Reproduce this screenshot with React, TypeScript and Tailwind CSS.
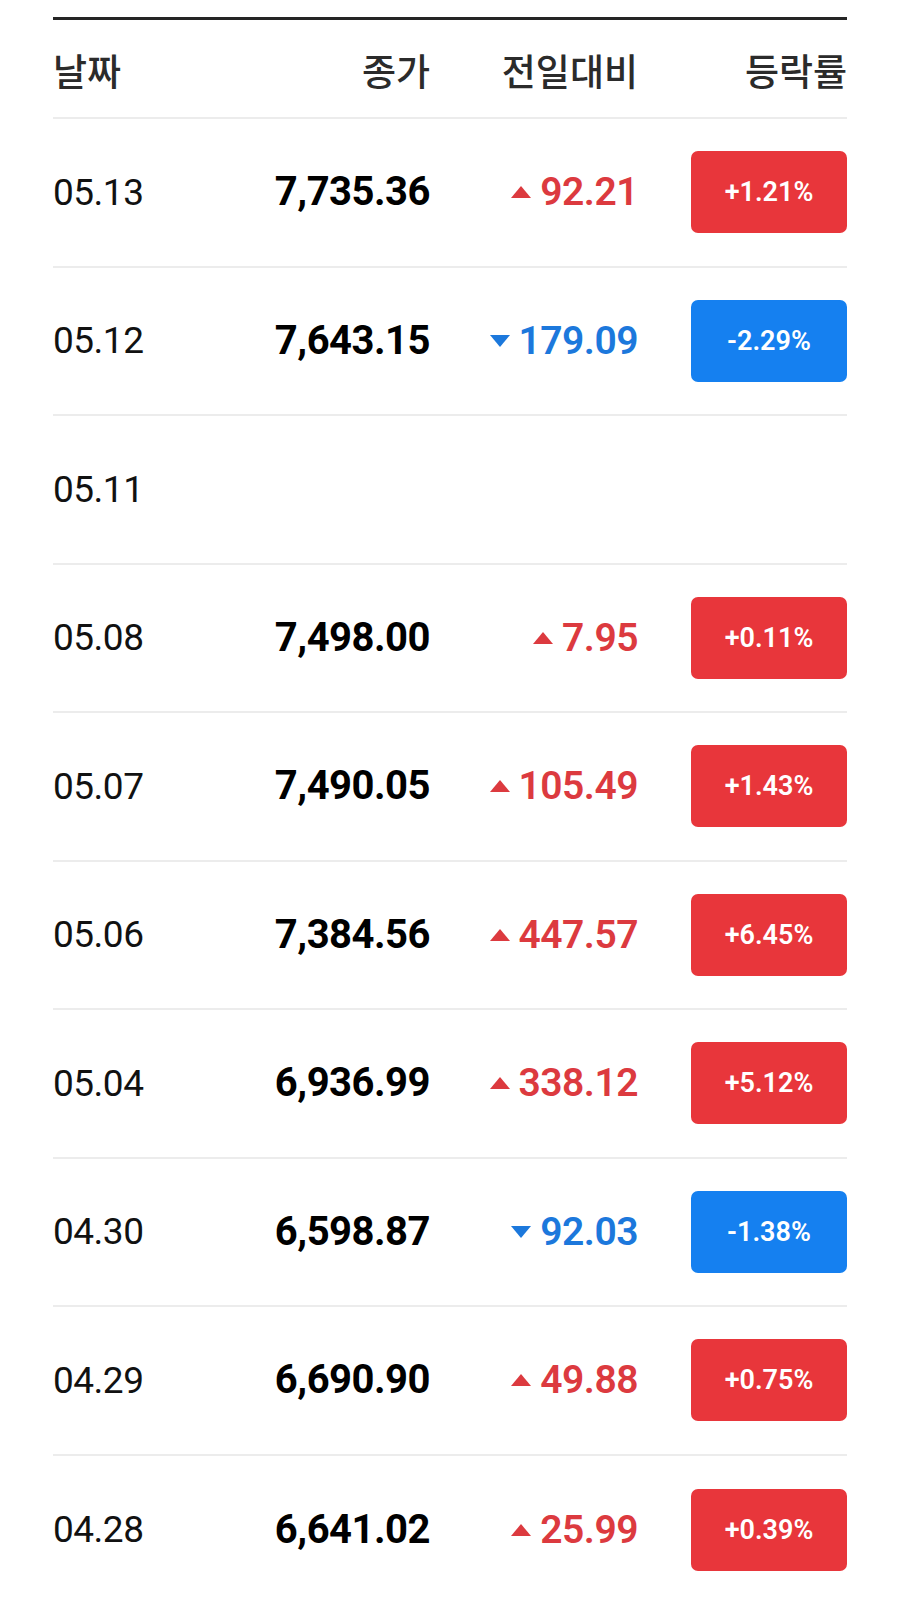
import React from 'react';

type Row = { date: string; close?: string; change?: string; rate?: string; up?: boolean };

const rows: Row[] = [
    { date: '05.13', close: '7,735.36', change: '92.21', rate: '+1.21%', up: true },
    { date: '05.12', close: '7,643.15', change: '179.09', rate: '-2.29%', up: false },
    { date: '05.11' },
    { date: '05.08', close: '7,498.00', change: '7.95', rate: '+0.11%', up: true },
    { date: '05.07', close: '7,490.05', change: '105.49', rate: '+1.43%', up: true },
    { date: '05.06', close: '7,384.56', change: '447.57', rate: '+6.45%', up: true },
    { date: '05.04', close: '6,936.99', change: '338.12', rate: '+5.12%', up: true },
    { date: '04.30', close: '6,598.87', change: '92.03', rate: '-1.38%', up: false },
    { date: '04.29', close: '6,690.90', change: '49.88', rate: '+0.75%', up: true },
    { date: '04.28', close: '6,641.02', change: '25.99', rate: '+0.39%', up: true },
];

const cols = 'grid grid-cols-[177px_200px_208px_209px] items-center';

function Triangle({ up }: { up: boolean }) {
    return (
        <svg width="20" height="12" viewBox="0 0 20 12" className="mr-[9px] shrink-0">
            {up ? <polygon points="10,0 20,12 0,12" fill="#dc3a3f" /> : <polygon points="0,0 20,0 10,12" fill="#1c78dc" />}
        </svg>
    );
}

export default function App() {
    return (
        <div className="min-h-[1597px] bg-white pt-[17px] px-[53px] font-['Roboto','Noto_Sans_CJK_KR',sans-serif]">
            <div className="border-t-[3px] border-[#252525]">
                {/* header */}
                <div className={`${cols} h-[99px] pt-[4px] text-[37px] font-medium text-[#2b2b2b] font-['Noto_Sans_CJK_KR',sans-serif] border-b-2 border-[#ececec]`}>
                    <div>날짜</div>
                    <div className="text-right">종가</div>
                    <div className="text-right">전일대비</div>
                    <div className="text-right">등락률</div>
                </div>

                {rows.map((r, i) => (
                    <div key={i} className={`${cols} h-[148.5px] ${i < rows.length - 1 ? 'border-b-2 border-[#ececec]' : ''}`}>
                        <div className="text-[37px] text-[#111] tracking-[-0.5px]">{r.date}</div>
                        <div className="text-right text-[40px] font-bold text-black tracking-[-0.5px]">{r.close}</div>
                        <div className="flex items-center justify-end">
                            {r.change && (
                                <>
                                    <Triangle up={!!r.up} />
                                    <span className={`text-[39px] font-semibold tracking-[-0.5px] ${r.up ? 'text-[#dc3a3f]' : 'text-[#1c78dc]'}`}>{r.change}</span>
                                </>
                            )}
                        </div>
                        <div className="flex justify-end">
                            {r.rate && (
                                <div className={`w-[156px] h-[82px] rounded-[7px] flex items-center justify-center text-white text-[27px] font-semibold ${r.up ? 'bg-[#e8363b]' : 'bg-[#1580f0]'}`}>
                                    {r.rate}
                                </div>
                            )}
                        </div>
                    </div>
                ))}
            </div>
        </div>
    );
}
